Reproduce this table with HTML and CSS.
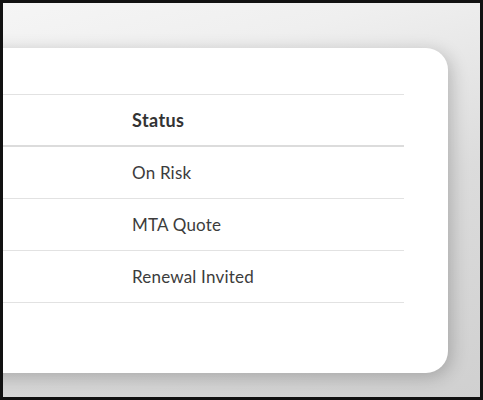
FILE: index.html
```html
<!DOCTYPE html>
<html lang="en">
<head>
    <meta charset="UTF-8">
    <meta name="viewport" content="width=device-width, initial-scale=1.0">
    <title>Policies</title>
    <link rel="stylesheet" href="styles.css">
</head>
<body>

<div class="frame">
    <div class="card">
        <table class="policy-table">
            <thead>
                <tr><th>Status</th></tr>
            </thead>
            <tbody>
                <tr><td>On Risk</td></tr>
                <tr><td>MTA Quote</td></tr>
                <tr><td>Renewal Invited</td></tr>
            </tbody>
        </table>
    </div>
</div>

</body>
</html>
```

FILE: styles.css
```css
html, body {
    margin: 0;
    padding: 0;
}
body {
    font-family: Lato, "Open Sans", sans-serif;
    width: 483px;
    height: 400px;
    overflow: hidden;
}
.frame {
    box-sizing: border-box;
    width: 483px;
    height: 400px;
    border: 3px solid #111;
    overflow: hidden;
    background: linear-gradient(165deg, #f5f5f5 0%, #efefef 20%, #dcdcdc 55%, #d0d0d0 100%);
    padding-top: 45px;
}
.card {
    margin-left: -40px; /* card runs off the left edge */
    width: 485px;
    height: 325px;
    box-sizing: border-box;
    background: #fff;
    border-radius: 22px;
    box-shadow: 3px 4px 18px rgba(0, 0, 0, 0.22);
    padding: 46px 44px 0 0;
}
.policy-table {
    width: 100%;
    border-collapse: collapse;
    border-top: 1px solid #e2e2e2;
}
.policy-table th,
.policy-table td {
    text-align: left;
    padding: 0 0 0 169px;
    color: #3c3c3c;
    letter-spacing: 0.2px;
}
.policy-table th {
    height: 50px;
    font-size: 18px;
    font-weight: 700;
    color: #333;
    letter-spacing: 0.4px;
    border-bottom: 2px solid #dcdcdc;
}
.policy-table td {
    height: 51px;
    font-size: 17px;
    border-bottom: 1px solid #e2e2e2;
}
```
